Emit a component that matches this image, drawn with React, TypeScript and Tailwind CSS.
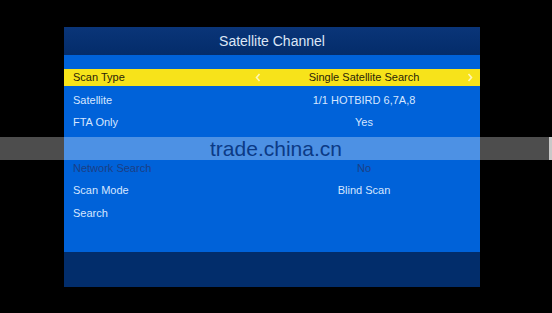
import React from 'react';

type Row = { label: string; value: string; selected?: boolean; dim?: boolean };

const rows: Row[] = [
    { label: 'Scan Type', value: 'Single Satellite Search', selected: true },
    { label: 'Satellite', value: '1/1 HOTBIRD 6,7A,8' },
    { label: 'FTA Only', value: 'Yes' },
    { label: '', value: '' },
    { label: 'Network Search', value: 'No', dim: true },
    { label: 'Scan Mode', value: 'Blind Scan' },
    { label: 'Search', value: '' },
];

function Chevron({ dir, show }: { dir: 'left' | 'right'; show: boolean }) {
    return (
        <svg width="6" height="9" viewBox="0 0 6 9" className={show ? '' : 'invisible'}>
            <path
                d={dir === 'left' ? 'M4.5 1 L1.5 4.5 L4.5 8' : 'M1.5 1 L4.5 4.5 L1.5 8'}
                fill="none"
                stroke="#fff6b8"
                strokeWidth="1.6"
            />
        </svg>
    );
}

function MenuRow({ row }: { row: Row }) {
    const textColor = row.selected
        ? 'text-[#2a2408]'
        : row.dim
        ? 'text-[#1b3f86]'
        : 'text-[#d6e6ff]';
    return (
        <div className="h-[22.67px] flex items-center">
            <div className={`w-full h-[17px] flex items-center ${row.selected ? 'bg-[#f7e31a]' : ''} ${textColor}`}>
                <div className="w-[186px] pl-[9px]">{row.label}</div>
                <div className="flex-1 flex items-center pl-[5px] pr-[7px]">
                    <Chevron dir="left" show={!!row.selected} />
                    <div className="flex-1 text-center">{row.value}</div>
                    <Chevron dir="right" show={!!row.selected} />
                </div>
            </div>
        </div>
    );
}

export default function App() {
    return (
        <div
            className="relative w-[552px] h-[313px] bg-black overflow-hidden pt-[27px] pl-[64px]"
            style={{ fontFamily: '"Liberation Sans", Arial, sans-serif' }}
        >
            <div className="w-[416px]">
                <div className="h-[28px] bg-gradient-to-b from-[#0a3578] to-[#042c6a] flex items-center justify-center text-[14px] text-[#dce6f6]">
                    Satellite Channel
                </div>
                <div className="h-[197px] bg-[#0062d9] pt-[11px] text-[11px]">
                    {rows.map((r, i) => (
                        <MenuRow key={i} row={r} />
                    ))}
                </div>
                <div className="h-[35px] bg-[#022d6b]" />
            </div>

            {/* watermark band */}
            <div className="absolute left-0 top-[137px] w-[552px] h-[23px] bg-white/30 flex items-center justify-center">
                <span className="text-[21px] leading-none text-[#0b3a86] pb-[1px]">trade.china.cn</span>
                <div className="absolute right-0 top-0 w-[3px] h-[23px] bg-[#c8c8c8]" />
            </div>
        </div>
    );
}
